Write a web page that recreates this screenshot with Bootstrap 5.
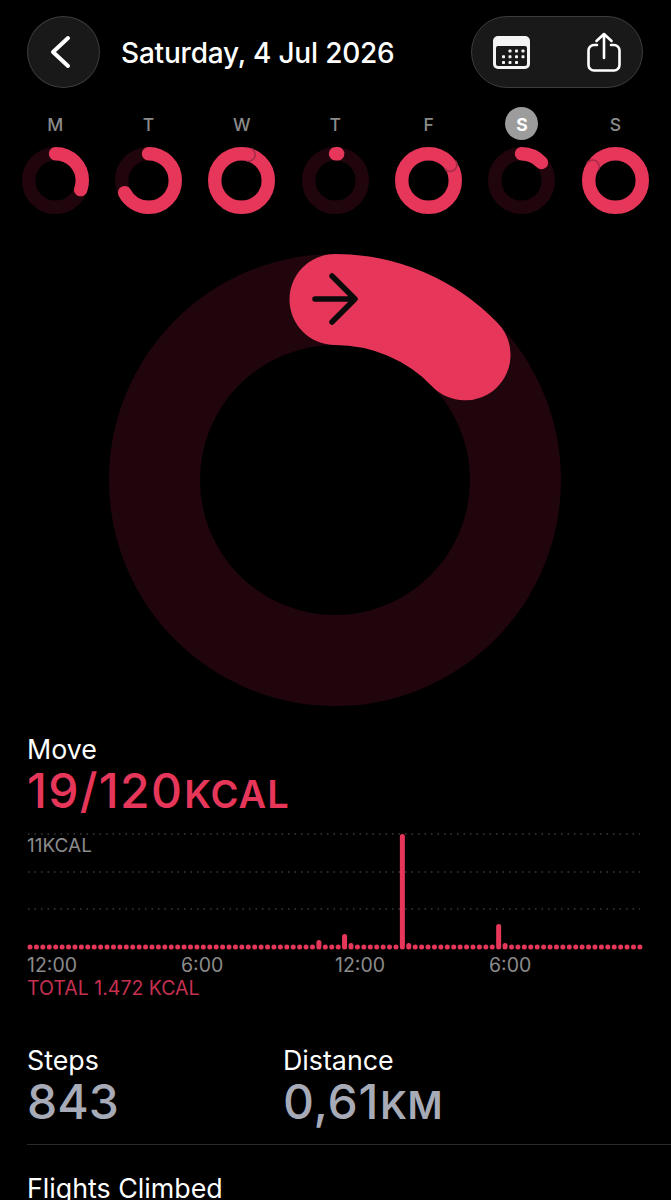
<!DOCTYPE html>
<html lang="en">
  <head>
    <meta charset="UTF-8" />
    <meta name="viewport" content="width=device-width, initial-scale=1" />
    <title>Activity</title>
    <link href="https://cdn.jsdelivr.net/npm/bootstrap@5.3.0/dist/css/bootstrap.min.css" rel="stylesheet" />
    <style>
      body { background: #000; color: #fff; font-family: Inter, "Liberation Sans", sans-serif; }
      .screen { width: 671px; height: 1200px; overflow: hidden; }
      .top-bar { padding: 16px 28px 0 27px; height: 88px; }
      .glass { background: #191919; border: 1px solid #3d3d3d; height: 72px; }
      .back-btn { width: 73px; }
      .back-btn svg { margin-right: 7px; }
      .tools { width: 172px; padding: 0 21px 0 21px; }
      .day-title { font-size: 28px; font-weight: 500; margin-left: 21px; letter-spacing: -0.2px; margin-top: 2px; }
      .week { padding: 19px 9px 0 8.5px; display: grid; grid-template-columns: repeat(7, 1fr); }
      .day-letter { height: 33px; width: 33px; line-height: 35px; font-size: 17.5px; font-weight: 500; color: #8b8b8b; }
      .day-letter.today { background: #9c9c9c; color: #fff; font-weight: 700; }
      .mini-ring { width: 67px; height: 67px; margin-top: 7px; }
      .big-ring { width: 460px; height: 460px; margin-top: 36px; margin-right: 1px; }
      .stats { padding: 0 0 0 27px; margin-top: 22px; }
      .stat-label { font-size: 26.8px; line-height: 34px; }
      .stat-value { font-size: 48px; line-height: 49px; }
      .stat-value small { font-size: 38px; font-weight: 600; margin-left: 1px; letter-spacing: 1px; }
      .pink { color: #e6375a; font-weight: 500; letter-spacing: 1.3px; }
      .grey-value { color: #a7aab7; font-weight: 500; }
      .grey-value.wide { letter-spacing: 0.8px; }
      .grey-value.wide small { letter-spacing: 0.4px; }
      .chart { width: 616px; height: 120px; margin-top: 13px; }
      .chart svg { display: block; }
      .chart-max { left: 0; top: 0; font-size: 19px; color: #8b8b8b; }
      .axis { width: 616px; font-size: 19.500px; line-height: 24px; color: #8b8b8b; margin-top: 1px; }
      .total { font-size: 19.500px; line-height: 22px; color: #c5304f; }
      .col-steps { width: 256px; }
      .pair { margin-top: 44px; }
      .rule { border-top: 1px solid #2a2a2a; margin-top: 14px; }
      .flights { margin-top: 30px; line-height: 26px; }
    </style>
  </head>
  <body>
    <div class="screen">
      <div class="top-bar d-flex align-items-center">
        <div class="glass back-btn rounded-circle d-flex align-items-center justify-content-center flex-shrink-0">
          <svg width="24" height="34" viewBox="0 0 24 34" fill="none" stroke="#fff" stroke-width="4" stroke-linecap="round" stroke-linejoin="round">
            <path d="M20 3 L5 17 L20 31" />
          </svg>
        </div>
        <div class="day-title flex-grow-1">Saturday, 4 Jul 2026</div>
        <div class="glass tools rounded-pill d-flex align-items-center justify-content-between flex-shrink-0">
          <svg width="37" height="33" viewBox="0 0 37 33">
            <rect width="37" height="33" rx="5" fill="#f4f4f4" />
            <rect x="3" y="10" width="31" height="20" rx="2" fill="#191919" />
            <g fill="#f4f4f4" id="calDots"></g>
          </svg>
          <svg width="34" height="40" viewBox="0 0 34 40" fill="none" stroke="#fff" stroke-width="2.6" stroke-linecap="round" stroke-linejoin="round">
            <path d="M10 13 H7 a5.5 5.5 0 0 0 -5.5 5.5 V33 a5.5 5.5 0 0 0 5.5 5.5 H27 a5.5 5.5 0 0 0 5.5 -5.5 V18.500 a5.500 5.500 0 0 0 -5.500 -5.500 H24" />
            <path d="M17 26 V2 M9.500 9 L17 2 L24.500 9" />
          </svg>
        </div>
      </div>

      <div class="week" id="week"></div>

      <div class="d-flex justify-content-center">
        <svg class="big-ring" viewBox="0 0 460 460" fill="none">
          <defs>
            <linearGradient id="moveFill" gradientUnits="userSpaceOnUse" x1="190" y1="0" x2="390" y2="130">
              <stop offset="0" stop-color="#d93a5c" />
              <stop offset="0.5" stop-color="#e6375a" />
            </linearGradient>
          </defs>
          <circle cx="230" cy="230" r="180.500" stroke="#21050c" stroke-width="91" />
          <circle cx="230" cy="230" r="180.500" stroke="url(#moveFill)" stroke-width="91" stroke-linecap="round" pathLength="360" stroke-dasharray="46.100 360" transform="rotate(-90 230 230)" />
          <path d="M210 49 H249 M227 26 L250 49 L227 72" stroke="#0a0a0a" stroke-width="5.500" stroke-linecap="round" stroke-linejoin="round" />
        </svg>
      </div>

      <div class="stats">
        <div class="stat-label">Move</div>
        <div class="stat-value pink">19/120<small>KCAL</small></div>

        <div class="chart position-relative">
          <svg id="chart" width="616" height="120" viewBox="0 0 616 120"></svg>
          <div class="chart-max position-absolute">11KCAL</div>
        </div>
        <div class="axis row g-0">
          <div class="col-3">12:00</div>
          <div class="col-3">6:00</div>
          <div class="col-3">12:00</div>
          <div class="col-3">6:00</div>
        </div>
        <div class="total">TOTAL 1.472 KCAL</div>

        <div class="pair d-flex">
          <div class="col-steps">
            <div class="stat-label">Steps</div>
            <div class="stat-value grey-value">843</div>
          </div>
          <div>
            <div class="stat-label">Distance</div>
            <div class="stat-value grey-value wide">0,61<small>KM</small></div>
          </div>
        </div>
        <div class="rule"></div>
        <div class="stat-label flights">Flights Climbed</div>
      </div>
    </div>

    <script src="https://cdn.jsdelivr.net/npm/bootstrap@5.3.0/dist/js/bootstrap.bundle.min.js"></script>
    <script>
      // Rings for the week: angle in degrees, above 360 means the ring overlaps itself
      const days = [
        { letter: 'M', angle: 110 },
        { letter: 'T', angle: 243 },
        { letter: 'W', angle: 375 },
        { letter: 'T', angle: 5 },
        { letter: 'F', angle: 414 },
        { letter: 'S', angle: 48, today: true },
        { letter: 'S', angle: 661 },
      ];

      function ringSvg(angle) {
        const r = 26.8;
        let overlap = '';
        if (angle >= 360) {
          // Dark edge on the leading side of the rounded end
          const deg = angle % 360;
          const a = (deg * Math.PI) / 180;
          const cx = 33.5 + r * Math.sin(a);
          const cy = 33.5 - r * Math.cos(a);
          overlap = `<path d="M0 -6.7 A6.7 6.7 0 0 1 0 6.700" transform="translate(${cx} ${cy}) rotate(${deg})" fill="none" stroke="#a32a48" stroke-width="1.500"/>`;
        }
        return `<svg class="mini-ring" viewBox="0 0 67 67" fill="none">
          <circle cx="33.500" cy="33.500" r="${r}" stroke="#21050c" stroke-width="13.400"/>
          <circle cx="33.500" cy="33.500" r="${r}" stroke="#e6375a" stroke-width="13.400" stroke-linecap="round"
            pathLength="360" stroke-dasharray="${Math.min(angle, 360)} 360" transform="rotate(-90 33.500 33.500)"/>
          ${overlap}
        </svg>`;
      }

      document.getElementById('week').innerHTML = days
        .map(
          (d) => `<div class="d-flex flex-column align-items-center">
            <div class="day-letter rounded-circle text-center ${d.today ? 'today' : ''}">${d.letter}</div>
            ${ringSvg(d.angle)}
          </div>`
        )
        .join('');

      // Calendar dots
      const calRows = [[1, 2, 3], [0, 1, 2, 3], [0, 1, 2]];
      let dots = '';
      calRows.forEach((row, y) => {
        row.forEach((x) => {
          dots += `<rect x="${9 + x * 6.5}" y="${13.500 + y * 5.800}" width="3" height="3" rx="0.800"/>`;
        });
      });
      document.getElementById('calDots').innerHTML = dots;

      // Chart: 96 quarter hours, only these are above the baseline (top y of the bar)
      const peaks = { 45: 108, 49: 102, 50: 111, 58: 2, 59: 111, 73: 92, 74: 111 };
      const baseY = 115;
      let chart = '';
      [2, 40, 77].forEach((y) => {
        chart += `<line x1="1" x2="613" y1="${y}" y2="${y}" stroke="#5a5a5a" stroke-width="1" stroke-dasharray="1.500 5"/>`;
      });
      for (let i = 0; i < 96; i++) {
        const x = 3 + i * 6.42;
        const top = peaks[i] !== undefined ? peaks[i] : baseY - 2.5;
        chart += `<rect x="${x - 2.5}" y="${top}" width="5" height="${baseY + 2.5 - top}" rx="2.500" fill="#e6375a"/>`;
      }
      document.getElementById('chart').innerHTML = chart;
    </script>
  </body>
</html>
